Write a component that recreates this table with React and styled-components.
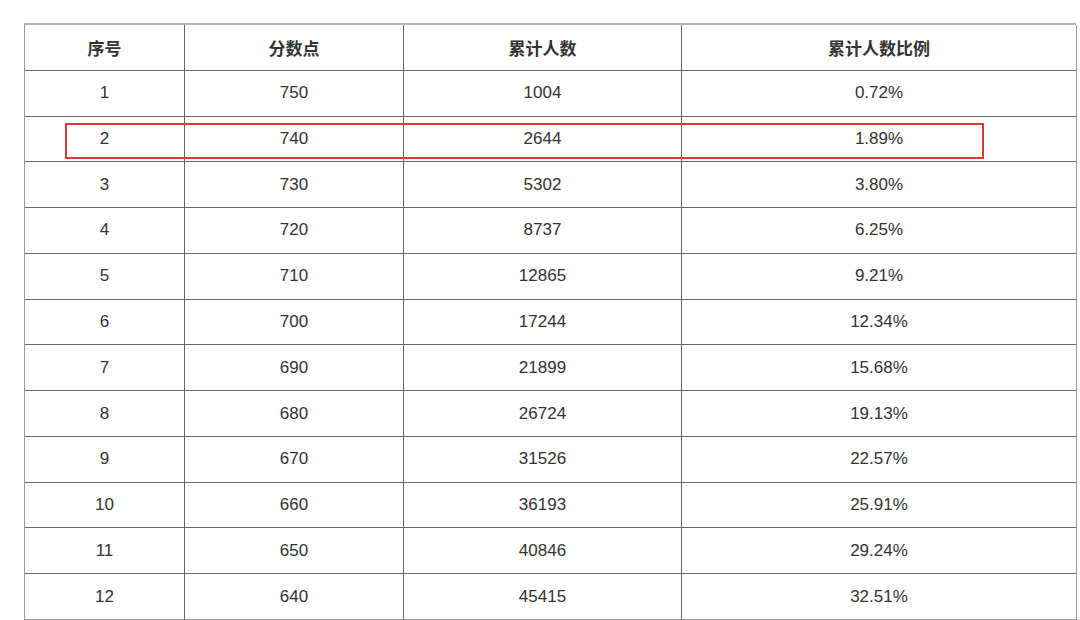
import React from "react";
import styled, { createGlobalStyle } from "styled-components";

const Global = createGlobalStyle`
  html, body { margin: 0; padding: 0; background: #ffffff; }
  body { font-family: "Liberation Sans", "Noto Sans CJK SC", sans-serif; }
`;

const Page = styled.div`
  width: 1080px;
  height: 620px;
  padding: 23px 0 0 24px;
  box-sizing: border-box;
  position: relative;
  overflow: hidden;
`;

const Table = styled.div`
  display: grid;
  grid-template-columns: 160px 219px 278px 395px;
  grid-template-rows: repeat(13, 45.77px);
  width: 1052px;
  border-top: 2px solid #b4b4b4;
  border-left: 1px solid #999;
  box-sizing: border-box;
`;

const Cell = styled.div`
  display: flex;
  align-items: center;
  justify-content: center;
  border-right: 1px solid ${(p) => (p.$last ? "#999" : "#666")};
  border-bottom: 1px solid ${(p) => (p.$bottom ? "#999" : "#6b6b6b")};
  font-size: ${(p) => (p.$head ? "17px" : "17px")};
  color: #333;
  font-weight: ${(p) => (p.$head ? 700 : 400)};
  font-family: ${(p) =>
    p.$head
      ? '"Noto Sans CJK SC", sans-serif'
      : '"Liberation Sans", "Noto Sans CJK SC", sans-serif'};
`;

const Highlight = styled.div`
  position: absolute;
  left: 65px;
  top: 123px;
  width: 919px;
  height: 36px;
  border: 2px solid #d93a32;
  box-sizing: border-box;
  pointer-events: none;
`;

const headers = ["序号", "分数点", "累计人数", "累计人数比例"];
const rows = [
  [1, 750, 1004, "0.72%"],
  [2, 740, 2644, "1.89%"],
  [3, 730, 5302, "3.80%"],
  [4, 720, 8737, "6.25%"],
  [5, 710, 12865, "9.21%"],
  [6, 700, 17244, "12.34%"],
  [7, 690, 21899, "15.68%"],
  [8, 680, 26724, "19.13%"],
  [9, 670, 31526, "22.57%"],
  [10, 660, 36193, "25.91%"],
  [11, 650, 40846, "29.24%"],
  [12, 640, 45415, "32.51%"],
];

export default function App() {
  return (
    <>
      <Global />
      <Page>
        <Table>
          {headers.map((h, i) => (
            <Cell key={h} $head $last={i === 3}>
              {h}
            </Cell>
          ))}
          {rows.map((r, ri) =>
            r.map((v, ci) => (
              <Cell
                key={`${ri}-${ci}`}
                $last={ci === 3}
                $bottom={ri === rows.length - 1}
              >
                {v}
              </Cell>
            ))
          )}
        </Table>
        <Highlight />
      </Page>
    </>
  );
}
